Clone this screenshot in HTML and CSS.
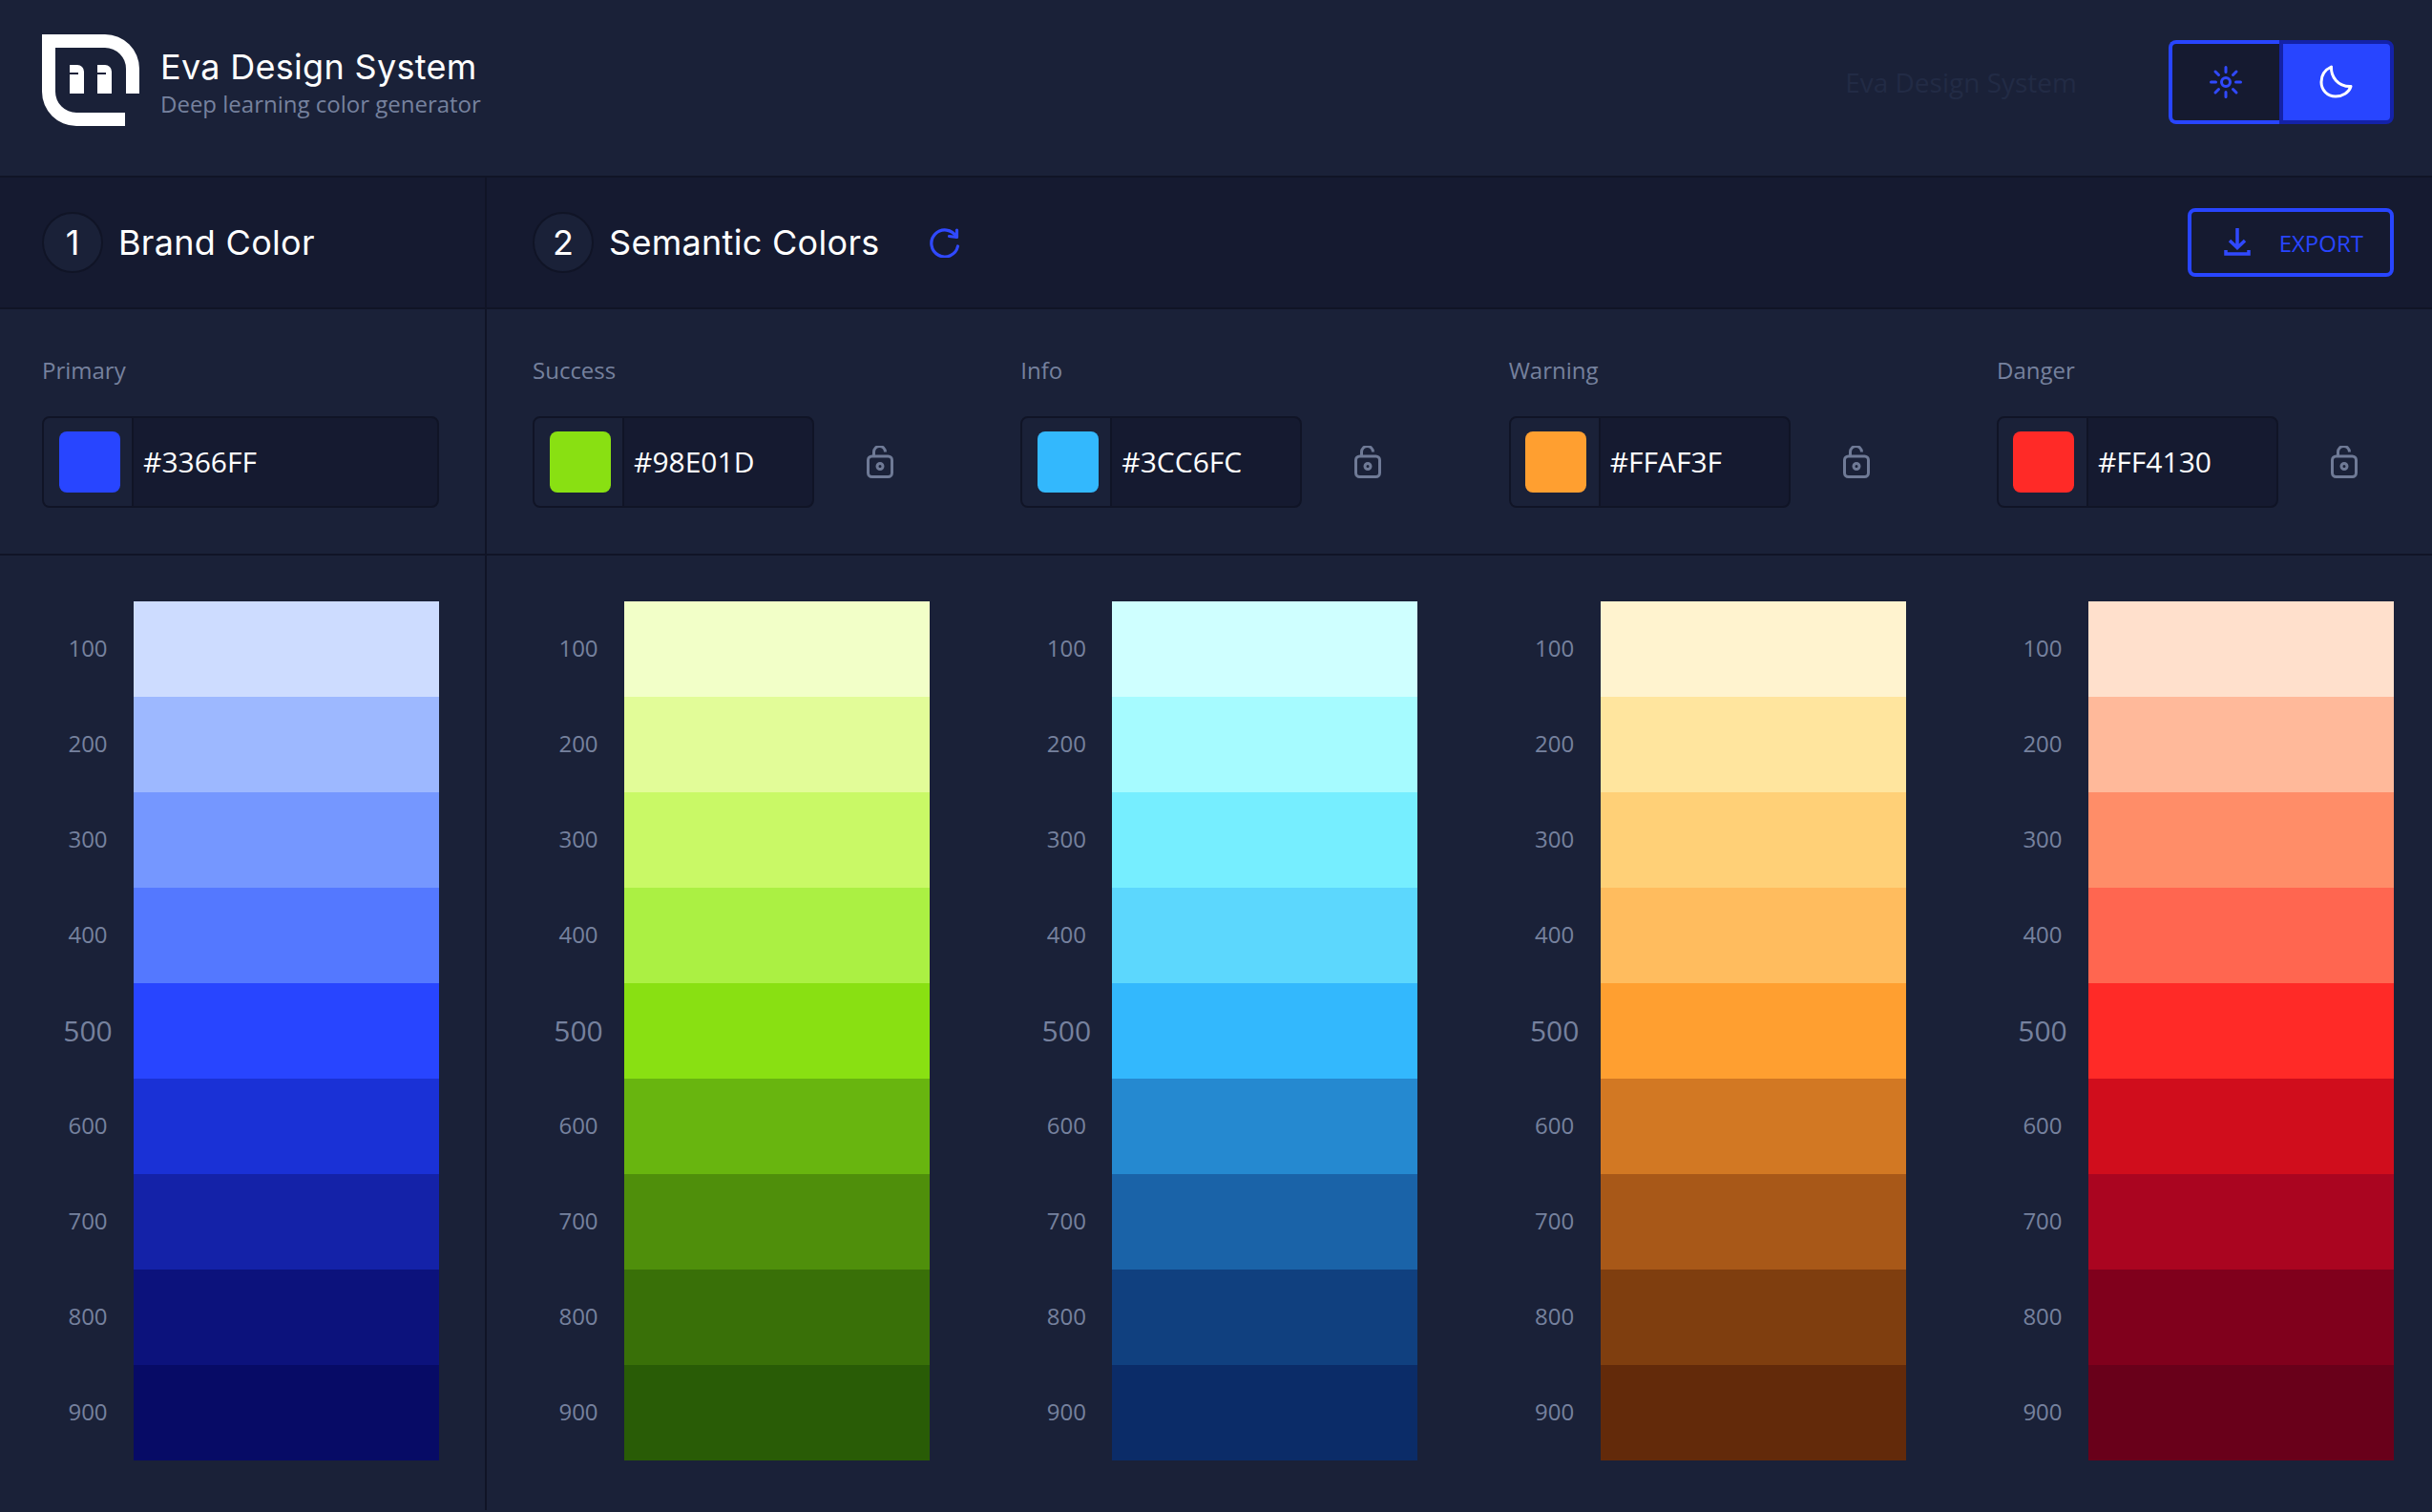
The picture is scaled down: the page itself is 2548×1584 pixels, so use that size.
FILE: index.html
```html
<!doctype html>
<html>
  <head>
    <title>Eva Colors</title>
    <link rel="stylesheet" href="styles.css">
  </head>
  <body>
    <header class="topbar">
      <div class="brand">
        <svg class="logo" width="102" height="96" viewBox="0 0 102 96">
          <path fill="#fff" d="M0 0H66A36 36 0 0 1 102 36V62H88V36A22 22 0 0 0 66 14H14V60A22 22 0 0 0 36 82H87V96H36A36 36 0 0 1 0 60Z"/>
          <path fill="#fff" d="M29 32H37A7 7 0 0 1 44 39V62H29V42H38V40H29Z"/>
          <path fill="#fff" d="M58 32H66A7 7 0 0 1 73 39V62H58V42H67V40H58Z"/>
        </svg>
        <div>
          <div class="brand-title">Eva Design System</div>
          <div class="brand-sub">Deep learning color generator</div>
        </div>
      </div>
      <div class="top-right">
        <span class="ghost">Eva Design System</span>
        <div class="toggle">
          <button class="toggle-btn sun">
            <svg width="34" height="34" viewBox="0 0 34 34" fill="none" stroke="#3049ff" stroke-width="3" stroke-linecap="round">
              <circle cx="17" cy="17" r="4.500"/>
              <path d="M17 1.500V6.500M17 27.500V32.500M1.500 17H6.500M27.500 17H32.500M6 6L9.500 9.500M24.500 24.500L28 28M6 28L9.500 24.500M24.500 9.500L28 6"/>
            </svg>
          </button>
          <button class="toggle-btn moon">
            <svg width="36" height="36" viewBox="0 0 36 36" fill="none" stroke="#fff" stroke-width="3" stroke-linejoin="round">
              <path d="M12.500 2C12 12 19 23 33 22.500C31 29 24 33 17 33C8 33 2 26 2 18C2 11 6 5 12.500 2Z"/>
            </svg>
          </button>
        </div>
      </div>
    </header>

    <section class="row steps">
      <div class="col-brand step">
        <span class="step-num">1</span>
        <span class="step-title">Brand Color</span>
      </div>
      <div class="col-semantic step">
        <span class="step-num">2</span>
        <span class="step-title">Semantic Colors</span>
        <svg class="refresh" width="32" height="32" viewBox="0 0 32 32" fill="none" stroke="#3049ff" stroke-width="3.200" stroke-linecap="round" stroke-linejoin="round">
          <path d="M29.500 20A14 14 0 1 1 28 10"/>
          <path d="M28.500 3V10.500L20.500 9.500"/>
        </svg>
        <button class="export">
          <svg width="28" height="30" viewBox="0 0 28 30" fill="none" stroke="#3049ff" stroke-width="3.500">
            <path d="M14 0V19M6 13L14 20.500L22 13"/>
            <path d="M2 23V27H26V23"/>
          </svg>
          EXPORT
        </button>
      </div>
    </section>

    <section class="row inputs">
      <div class="col-brand">
        <div class="field-label">Primary</div>
        <div class="color-input wide">
          <span class="swatch-cell"><span class="swatch primary"></span></span>
          <span class="hex">#3366FF</span>
        </div>
      </div>
      <div class="col-semantic semantic-grid">
        <div>
          <div class="field-label">Success</div>
          <div class="input-line">
            <div class="color-input">
              <span class="swatch-cell"><span class="swatch success"></span></span>
              <span class="hex">#98E01D</span>
            </div>
            <svg class="lock" width="28" height="34" viewBox="0 0 28 34" fill="none" stroke="#6f7a96" stroke-width="3"><path d="M7.500 11V6.500A6 6 0 0 1 19.500 6.500"/><rect x="1.500" y="11" width="25" height="21.500" rx="4"/><circle cx="14" cy="21.500" r="3"/></svg>
          </div>
        </div>
        <div>
          <div class="field-label">Info</div>
          <div class="input-line">
            <div class="color-input">
              <span class="swatch-cell"><span class="swatch info"></span></span>
              <span class="hex">#3CC6FC</span>
            </div>
            <svg class="lock" width="28" height="34" viewBox="0 0 28 34" fill="none" stroke="#6f7a96" stroke-width="3"><path d="M7.500 11V6.500A6 6 0 0 1 19.500 6.500"/><rect x="1.500" y="11" width="25" height="21.500" rx="4"/><circle cx="14" cy="21.500" r="3"/></svg>
          </div>
        </div>
        <div>
          <div class="field-label">Warning</div>
          <div class="input-line">
            <div class="color-input">
              <span class="swatch-cell"><span class="swatch warning"></span></span>
              <span class="hex">#FFAF3F</span>
            </div>
            <svg class="lock" width="28" height="34" viewBox="0 0 28 34" fill="none" stroke="#6f7a96" stroke-width="3"><path d="M7.500 11V6.500A6 6 0 0 1 19.500 6.500"/><rect x="1.500" y="11" width="25" height="21.500" rx="4"/><circle cx="14" cy="21.500" r="3"/></svg>
          </div>
        </div>
        <div>
          <div class="field-label">Danger</div>
          <div class="input-line">
            <div class="color-input">
              <span class="swatch-cell"><span class="swatch danger"></span></span>
              <span class="hex">#FF4130</span>
            </div>
            <svg class="lock" width="28" height="34" viewBox="0 0 28 34" fill="none" stroke="#6f7a96" stroke-width="3"><path d="M7.500 11V6.500A6 6 0 0 1 19.500 6.500"/><rect x="1.500" y="11" width="25" height="21.500" rx="4"/><circle cx="14" cy="21.500" r="3"/></svg>
          </div>
        </div>
      </div>
    </section>

    <section class="row palettes">
      <div class="col-brand" id="brand-col"></div>
      <div class="col-semantic semantic-grid" id="semantic-col"></div>
    </section>

    <script type="text/javascript">
      const steps = [100, 200, 300, 400, 500, 600, 700, 800, 900];
      const palettes = {
        primary: ['#cddcff', '#9db8ff', '#7597ff', '#5478ff', '#2845ff', '#1a31d6', '#1422a8', '#0c127c', '#070b66'],
        success: ['#f2ffc8', '#e2fc98', '#c9f966', '#abf043', '#89e012', '#68b50f', '#4f8f0b', '#397008', '#295c06'],
        info: ['#cfffff', '#a6fbff', '#76eeff', '#5cd7fd', '#33b8fd', '#2589d0', '#1a63a8', '#10407f', '#0b2c68'],
        warning: ['#fff3cf', '#ffe59e', '#ffd077', '#ffbc5e', '#ff9f30', '#d27823', '#a85818', '#7f3e0f', '#632a0a'],
        danger: ['#ffe0cc', '#ffb99a', '#ff8d68', '#ff6650', '#ff2a27', '#d00d1c', '#aa0520', '#80001c', '#69001a']
      };

      function buildPalette(name) {
        const palette = document.createElement('div');
        palette.className = 'palette';

        steps.forEach((step, index) => {
          const label = document.createElement('span');
          label.className = step === 500 ? 'step-label main' : 'step-label';
          label.textContent = step;

          const shade = document.createElement('span');
          shade.className = 'shade';
          shade.style.background = palettes[name][index];

          palette.appendChild(label);
          palette.appendChild(shade);
        });

        return palette;
      }

      document.querySelector('#brand-col').appendChild(buildPalette('primary'));

      ['success', 'info', 'warning', 'danger'].forEach(name => {
        document.querySelector('#semantic-col').appendChild(buildPalette(name));
      });
    </script>
  </body>
</html>
```

FILE: styles.css
```css
* {
  box-sizing: border-box;
}

body {
  margin: 0;
  min-height: 1584px;
  background: #1a2138;
  color: #fff;
  font-family: "Open Sans", sans-serif;
  overflow: hidden;
}

.topbar {
  display: flex;
  justify-content: space-between;
  align-items: center;
  height: 186px;
  padding: 0 40px 12px 44px;
  border-bottom: 2px solid #101426;
}

.brand {
  display: flex;
  align-items: center;
  gap: 22px;
}

.logo {
  display: block;
  margin-bottom: 4px;
}

.brand-title {
  font-family: Inter, sans-serif;
  font-size: 36px;
  line-height: 44px;
  letter-spacing: 0.3px;
}

.brand-sub {
  margin-top: 2px;
  font-size: 24px;
  line-height: 30px;
  color: #76819e;
}

.top-right {
  display: flex;
  align-items: center;
  gap: 96px;
}

.ghost {
  font-size: 28px;
  color: #222b45;
}

.toggle {
  display: flex;
  height: 88px;
}

.toggle-btn {
  display: flex;
  align-items: center;
  justify-content: center;
  padding: 0;
  border-style: solid;
  border-width: 4px;
}

.sun {
  width: 116px;
  background: #151a30;
  border-color: #2845ff;
  border-right: 0;
  border-radius: 8px 0 0 8px;
}

.moon {
  width: 120px;
  background: #2845ff;
  border-color: #1422a8;
  border-radius: 0 8px 8px 0;
}

.row {
  display: grid;
  grid-template-columns: 510px 1fr;
  border-bottom: 2px solid #101426;
}

.col-brand {
  padding-left: 44px;
  padding-right: 48px;
  border-right: 2px solid #101426;
}

.col-semantic {
  padding-left: 48px;
  padding-right: 40px;
}

.steps {
  height: 138px;
  background: #151a30;
}

.step {
  display: flex;
  align-items: center;
}

.step-num {
  display: flex;
  align-items: center;
  justify-content: center;
  width: 64px;
  height: 64px;
  margin-right: 16px;
  border: 2px solid #101426;
  border-radius: 50%;
  background: #1a2138;
  font-family: Inter, sans-serif;
  font-size: 36px;
}

.step-title {
  font-family: Inter, sans-serif;
  font-size: 36px;
  letter-spacing: 0.3px;
}

.refresh {
  margin-left: 52px;
}

.export {
  display: flex;
  align-items: center;
  justify-content: space-between;
  width: 216px;
  height: 72px;
  margin-left: auto;
  padding: 0 28px 0 34px;
  background: transparent;
  border: 4px solid #2845ff;
  border-radius: 8px;
  color: #2845ff;
  font-family: "Open Sans", sans-serif;
  font-size: 24px;
  font-weight: 500;
}

.inputs {
  height: 258px;
}

.inputs > div {
  padding-top: 48px;
}

.field-label {
  height: 32px;
  margin-bottom: 32px;
  font-size: 24px;
  line-height: 32px;
  color: #76819e;
}

.semantic-grid {
  display: grid;
  grid-template-columns: repeat(4, 416px);
  justify-content: space-between;
}

.input-line {
  display: flex;
  align-items: center;
}

.lock {
  margin-left: 55px;
  margin-top: -1px;
}

.color-input {
  display: flex;
  align-items: center;
  width: 295px;
  height: 96px;
  background: #151a30;
  border: 2px solid #101426;
  border-radius: 8px;
  overflow: hidden;
}

.color-input.wide {
  width: 416px;
}

.swatch-cell {
  display: flex;
  align-items: center;
  justify-content: center;
  flex: none;
  width: 94px;
  height: 100%;
  padding-left: 3px;
  background: #1a2138;
  border-right: 2px solid #101426;
}

.swatch {
  width: 64px;
  height: 64px;
  border-radius: 8px;
}

.primary { background: #2845ff; }
.success { background: #89e012; }
.info { background: #33b8fd; }
.warning { background: #ff9f30; }
.danger { background: #ff2a27; }

.hex {
  padding-left: 10px;
  padding-bottom: 2px;
  font-size: 30px;
  font-weight: 500;
}

.palettes {
  height: 1000px;
  border-bottom: 0;
}

.palettes > div {
  padding-top: 48px;
}

.palette {
  display: grid;
  grid-template-columns: 96px 320px;
  grid-auto-rows: 100px;
  align-items: center;
}

.step-label {
  padding-bottom: 3px;
  text-align: center;
  font-size: 24px;
  color: #76819e;
}

.step-label.main {
  padding-bottom: 1px;
  font-size: 30px;
}

.shade {
  height: 100%;
}
```
